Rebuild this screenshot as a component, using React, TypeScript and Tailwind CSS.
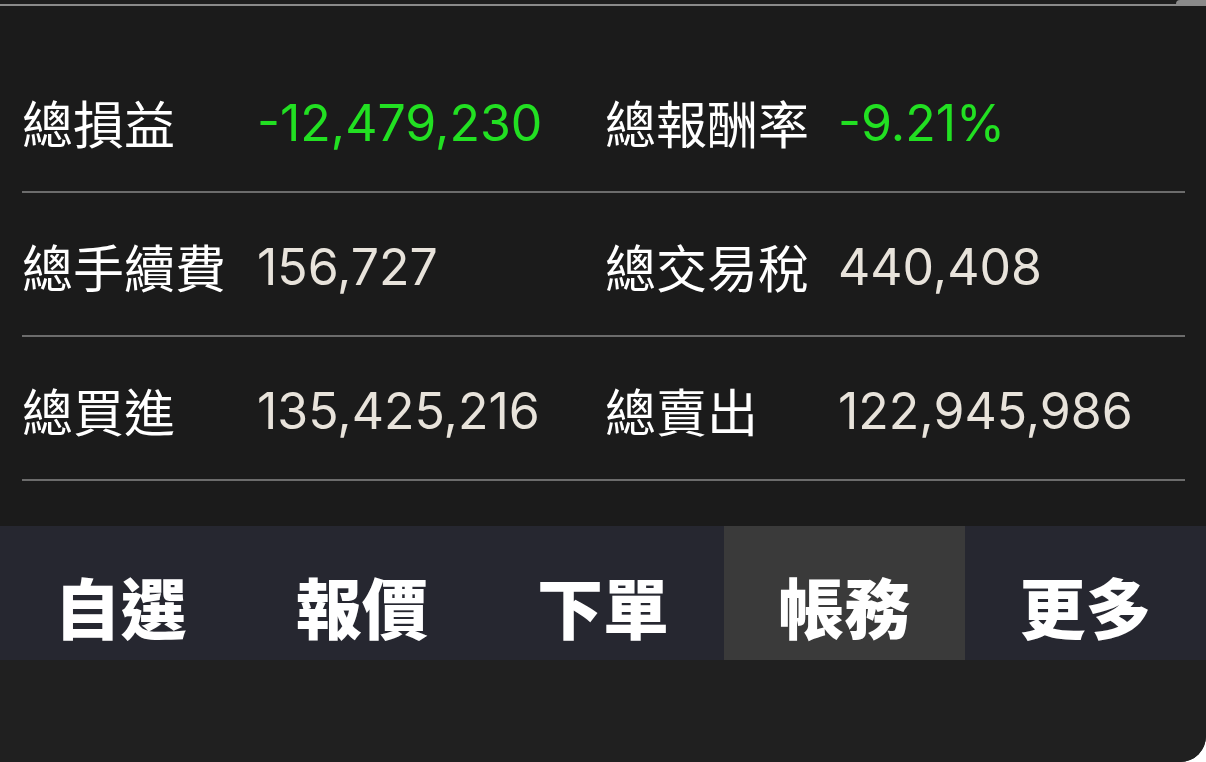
import React from 'react';

type Row = {
  label1: string;
  value1: string;
  label2: string;
  value2: string;
  green?: boolean;
};

const rows: Row[] = [
  { label1: '總損益', value1: '-12,479,230', label2: '總報酬率', value2: '-9.21%', green: true },
  { label1: '總手續費', value1: '156,727', label2: '總交易稅', value2: '440,408' },
  { label1: '總買進', value1: '135,425,216', label2: '總賣出', value2: '122,945,986' },
];

const tabs = ['自選', '報價', '下單', '帳務', '更多'];

const cjk = "font-['Noto_Sans_CJK_TC','Noto_Sans',sans-serif]";
const num = "font-['Inter','Liberation_Sans',sans-serif]";

export default function App() {
  return (
    <div className="w-[1206px] h-[762px] bg-white overflow-hidden">
      <div className="w-full h-full bg-[#1b1b1b] rounded-br-[26px] overflow-hidden flex flex-col">
        {/* top edge */}
        <div className="flex h-[4px] bg-[#1e1e1e]">
          <div className="flex-1" />
          <div className="w-[30px] bg-[#8a8a8a] rounded-tl-[6px]" />
        </div>
        <div className="h-[2px] bg-[#8a8a8a]" />

        {/* summary rows */}
        <div className="pt-[43px] px-[22px] pr-[21px]">
          {rows.map((r) => (
            <div
              key={r.label1}
              className="grid grid-cols-[235px_348px_233px_1fr] items-center h-[144px] border-b-2 border-[#6c6c6c] pt-[5px]"
            >
              <span className={`${cjk} text-[51px] leading-none text-white`}>{r.label1}</span>
              <span className={`${num} text-[50px] leading-none ${r.green ? 'text-[#22e022]' : 'text-[#e8e3db]'}`}>
                {r.value1}
              </span>
              <span className={`${cjk} text-[51px] leading-none text-white`}>{r.label2}</span>
              <span className={`${num} text-[50px] leading-none ${r.green ? 'text-[#22e022]' : 'text-[#e8e3db]'}`}>
                {r.value2}
              </span>
            </div>
          ))}
        </div>

        <div className="h-[45px]" />

        {/* tab bar */}
        <div className="flex h-[134px] bg-[#262730]">
          {tabs.map((t) => (
            <div
              key={t}
              className={`flex-1 flex justify-center pt-[46px] ${t === '帳務' ? 'bg-[#3a3a3a]' : ''}`}
            >
              <span className={`${cjk} text-[66px] font-black leading-none text-white`}>{t}</span>
            </div>
          ))}
        </div>

        <div className="flex-1 bg-[#202020]" />
      </div>
    </div>
  );
}
